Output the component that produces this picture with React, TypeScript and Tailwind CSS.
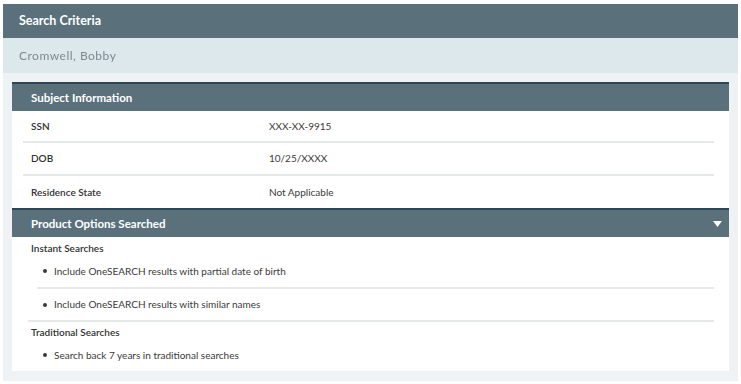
import React from "react";

const font = { fontFamily: "Lato, 'Open Sans', sans-serif" };

const subjectRows = [
  { label: "SSN", value: "XXX-XX-9915" },
  { label: "DOB", value: "10/25/XXXX" },
  { label: "Residence State", value: "Not Applicable" },
];

function SectionHeader({ title, caret }: { title: string; caret?: boolean }) {
  return (
    <div className="flex h-[29px] items-center justify-between border-t-2 border-[#2d4655] bg-[#5a717c] pl-[19px] pr-[6px]">
      <span className="text-[11.5px] font-bold text-white">{title}</span>
      {caret && (
        <svg width="9" height="6" viewBox="0 0 9 6" className="mr-[1px]">
          <path d="M0 0 H9 L4.5 6 Z" fill="#ffffff" />
        </svg>
      )}
    </div>
  );
}

function Bullet({ children }: { children: React.ReactNode }) {
  return (
    <div className="flex items-center pl-[31px] text-[10px] text-[#3a3a3a]">
      <span className="mr-[7px] inline-block h-[4px] w-[4px] rounded-full bg-[#3a3a3a]" />
      {children}
    </div>
  );
}

export default function App() {
  return (
    <div className="h-[384px] w-[741px] bg-white px-[3px] pt-[4px]" style={font}>
      <div className="flex h-[34px] items-center bg-[#5a717c] pl-[16px]">
        <span className="text-[12.5px] font-bold text-white">Search Criteria</span>
      </div>
      <div className="flex h-[35px] items-center bg-[#dce8eb] pl-[16px]">
        <span className="text-[12px] tracking-[0.5px] text-[#7c898e] blur-[0.4px]">Cromwell, Bobby</span>
      </div>
      <div className="bg-[#eef2f4] px-[9px] pb-[10px] pt-[9px]">
        <div className="bg-white">
          <SectionHeader title="Subject Information" />
          <div>
            {subjectRows.map((r, i) => (
              <div
                key={r.label}
                className={
                  "ml-[11px] mr-[15px] flex items-center pl-[8px] text-[10px] " +
                  (i === 1 ? "h-[33px] " : "h-[32px] ") +
                  (i < subjectRows.length - 1 ? "border-b-2 border-[#e6e9ea]" : "")
                }
              >
                <span className="w-[238px] font-semibold text-[#333]">{r.label}</span>
                <span className="text-[#3a3a3a]">{r.value}</span>
              </div>
            ))}
          </div>
          <SectionHeader title="Product Options Searched" caret />
          <div className="pb-[3px]">
            <div className="flex h-[22px] items-center pl-[19px] text-[10px] font-semibold text-[#333]">
              Instant Searches
            </div>
            <div className="flex h-[28px] items-center pb-[4px]">
              <Bullet>Include OneSEARCH results with partial date of birth</Bullet>
            </div>
            <div className="ml-[25px] mr-[15px] border-t-2 border-[#e6e9ea]" />
            <div className="flex h-[31px] items-center">
              <Bullet>Include OneSEARCH results with similar names</Bullet>
            </div>
            <div className="ml-[16px] mr-[15px] border-t-2 border-[#e6e9ea]" />
            <div className="flex h-[20px] items-center pl-[19px] text-[10px] font-semibold text-[#333]">
              Traditional Searches
            </div>
            <div className="flex h-[26px] items-center">
              <Bullet>Search back 7 years in traditional searches</Bullet>
            </div>
          </div>
        </div>
      </div>
    </div>
  );
}
